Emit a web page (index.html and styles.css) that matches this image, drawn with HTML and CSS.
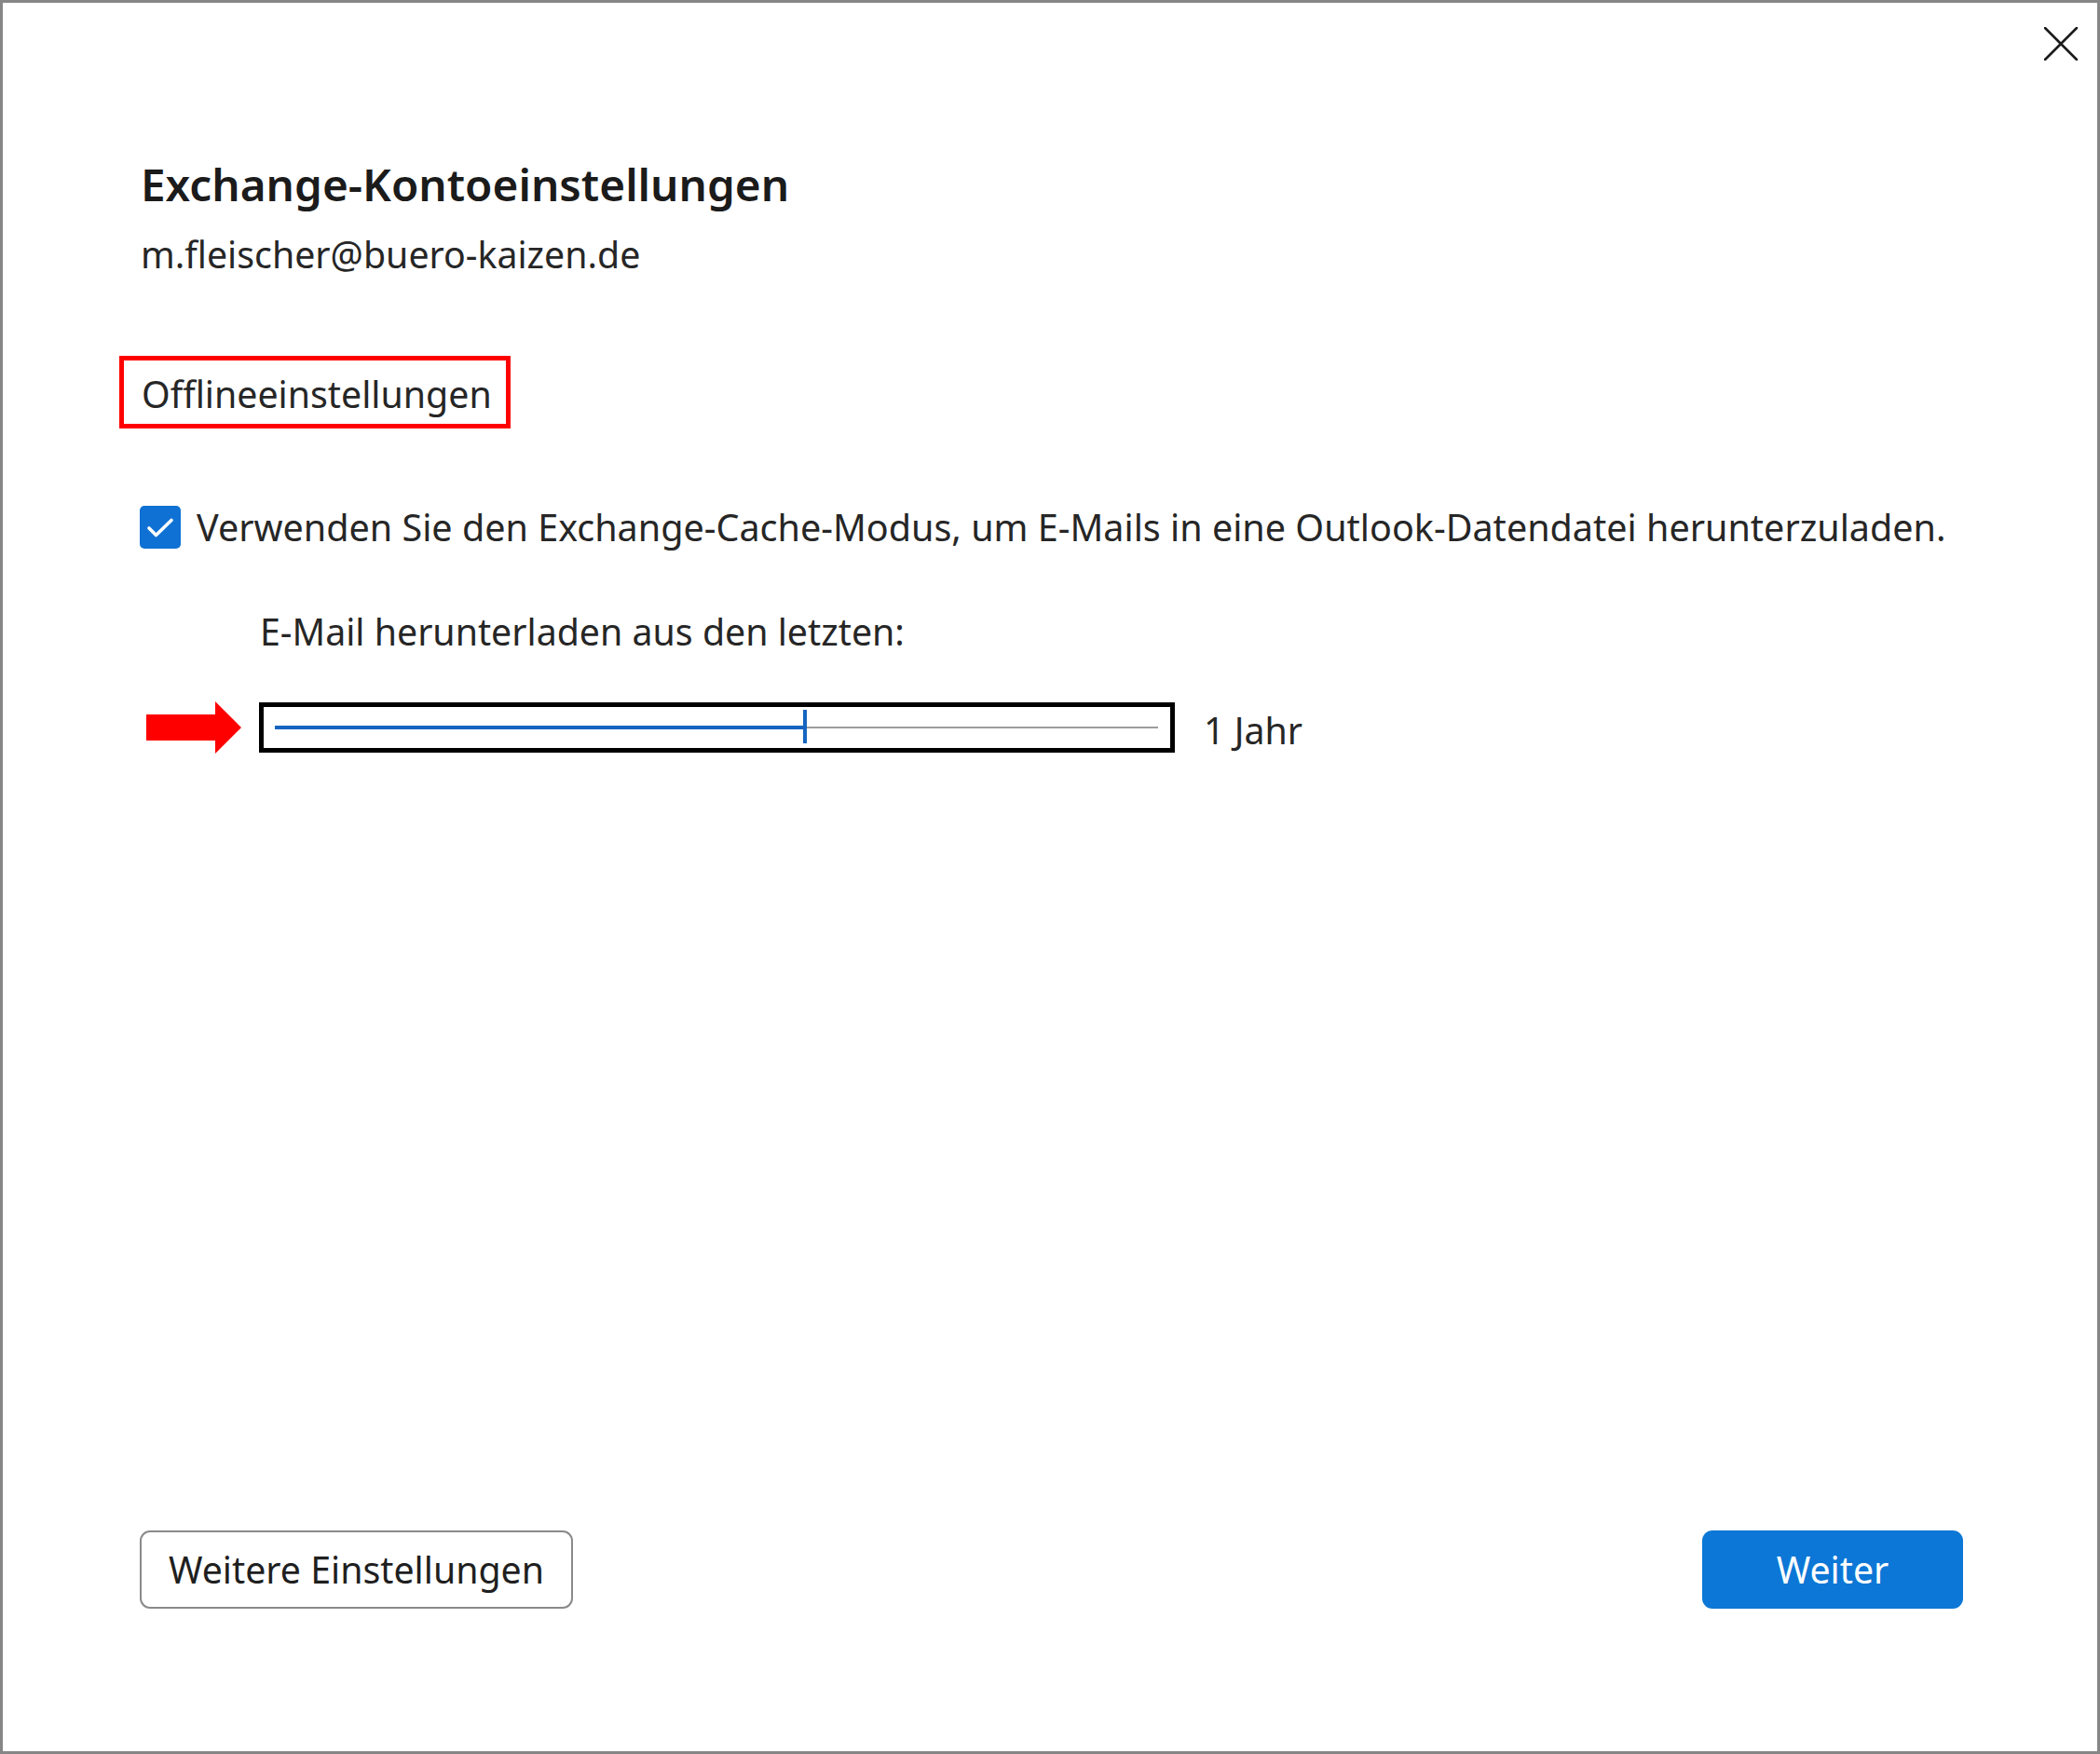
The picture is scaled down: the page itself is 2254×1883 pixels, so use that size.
FILE: index.html
```html
<!DOCTYPE html>
<html lang="de">
<head>
<meta charset="utf-8">
<title>Exchange-Kontoeinstellungen</title>
<link rel="stylesheet" href="styles.css">
</head>
<body>
<div class="window">
  <button class="close" aria-label="Schließen">
    <svg viewBox="0 0 36 36" width="36" height="36"><path d="M1 1 L35 35 M35 1 L1 35" stroke="#1a1a1a" stroke-width="2.6" fill="none" stroke-linecap="round"/></svg>
  </button>
  <div class="content">
    <h1 class="title">Exchange-Kontoeinstellungen</h1>
    <div class="email">m.fleischer@buero-kaizen.de</div>
    <div class="section"><span class="section-label">Offlineeinstellungen</span></div>
    <div class="check-row">
      <span class="checkbox">
        <svg viewBox="0 0 44 44" width="44" height="44"><path d="M10 23 L17.5 30.5 L34 14.5" stroke="#fff" stroke-width="3.6" fill="none" stroke-linecap="round" stroke-linejoin="round"/></svg>
      </span>
      <span class="check-text">Verwenden Sie den Exchange-Cache-Modus, um E-Mails in eine Outlook-Datendatei herunterzuladen.</span>
    </div>
    <div class="download-label">E-Mail herunterladen aus den letzten:</div>
    <div class="slider-row">
      <svg class="arrow" viewBox="0 0 105 57" width="105" height="57"><polygon points="2,14 76,14 76,0 104,28 76,56 76,42 2,42" fill="#ff0000"/></svg>
      <div class="slider-frame">
        <div class="track">
          <div class="fill"></div>
          <div class="thumb"></div>
        </div>
      </div>
      <span class="slider-value">1 Jahr</span>
    </div>
  </div>
  <div class="footer">
    <button class="btn secondary">Weitere Einstellungen</button>
    <button class="btn primary">Weiter</button>
  </div>
</div>
</body>
</html>
```
FILE: styles.css
```css
html, body {
  margin: 0;
  padding: 0;
  background: #ffffff;
}
body {
  font-family: "Noto Sans", "Open Sans", sans-serif;
  color: #262626;
}
.window {
  box-sizing: border-box;
  width: 2254px;
  height: 1883px;
  border: 3px solid #868686;
  background: #ffffff;
  position: relative;
  display: flex;
  flex-direction: column;
}
.close {
  position: absolute;
  top: 26px;
  right: 21px;
  width: 36px;
  height: 36px;
  padding: 0;
  border: 0;
  background: transparent;
}
.close svg { display: block; }
.content {
  padding: 165px 0 0 148px;
  display: flex;
  flex-direction: column;
  align-items: flex-start;
}
.title {
  margin: 0;
  font-size: 47.7px;
  line-height: 60px;
  font-weight: 600;
  color: #1b1b1b;
}
.email {
  margin-top: 17px;
  font-size: 39.3px;
  line-height: 56px;
}
.section {
  margin-top: 81px;
  margin-left: -23px;
  border: 5px solid #ff0000;
  padding: 8px 15px 4px 19px;
}
.section-label {
  display: block;
  font-size: 39.3px;
  line-height: 56px;
}
.check-row {
  margin-top: 78px;
  display: flex;
  align-items: center;
  gap: 17px;
  margin-left: -1px;
}
.checkbox {
  width: 44px;
  height: 46px;
  border-radius: 5px;
  background: #0f71d3;
  display: flex;
  align-items: center;
  justify-content: center;
}
.check-text {
  font-size: 39.5px;
  line-height: 56px;
}
.download-label {
  margin-top: 56px;
  margin-left: 128px;
  font-size: 39.3px;
  line-height: 56px;
}
.slider-row {
  margin-top: 44px;
  display: flex;
  align-items: center;
  margin-left: 4px;
}
.arrow { display: block; }
.slider-frame {
  margin-left: 18px;
  box-sizing: border-box;
  width: 983px;
  height: 54px;
  border: 5px solid #000000;
  padding: 0 13px 0 12px;
  display: flex;
  align-items: center;
}
.track {
  position: relative;
  flex: 1;
  height: 2px;
  background: #9c9c9c;
}
.fill {
  position: absolute;
  left: 0;
  top: -1px;
  width: 569px;
  height: 4px;
  background: #1565c0;
}
.thumb {
  position: absolute;
  left: 567px;
  top: -18px;
  width: 4px;
  height: 36px;
  background: #1565c0;
}
.slider-value {
  margin-left: 31px;
  font-size: 39.3px;
  line-height: 56px;
  padding-top: 6px;
}
.footer {
  margin-top: auto;
  padding: 0 144px 153px 147px;
  display: flex;
  justify-content: space-between;
}
.btn {
  box-sizing: border-box;
  height: 84px;
  border-radius: 11px;
  font-family: inherit;
  font-size: 39.3px;
  padding: 0;
  cursor: pointer;
}
.btn.secondary {
  width: 465px;
  border: 2px solid #8a8a8a;
  background: #ffffff;
  color: #1f1f1f;
}
.btn.primary {
  width: 280px;
  border: 0;
  background: #0c77d6;
  color: #ffffff;
}
```
